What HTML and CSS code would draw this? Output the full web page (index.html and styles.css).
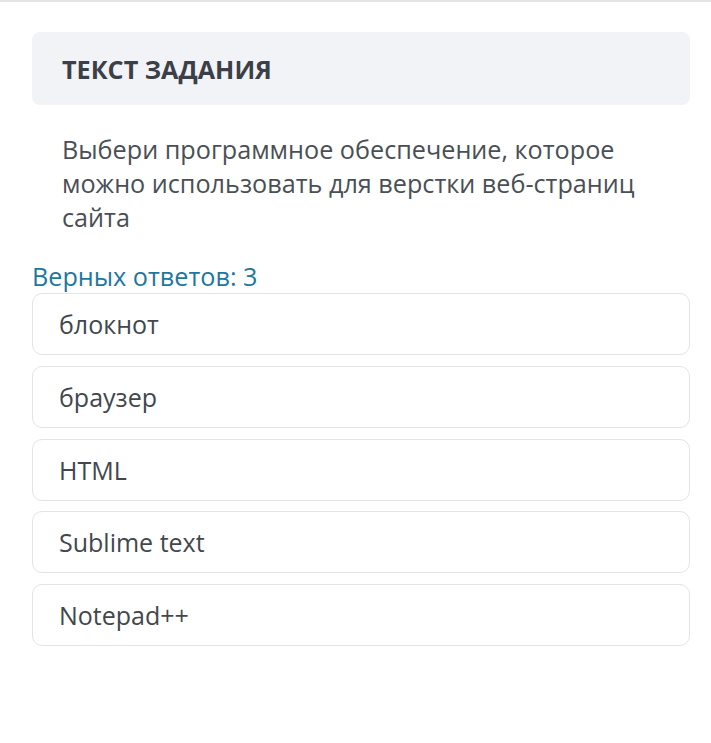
FILE: index.html
```html
<!DOCTYPE html>
<html lang="ru">
<head>
<meta charset="utf-8">
<link rel="stylesheet" href="styles.css">
</head>
<body>
<div class="topline"></div>
<main class="task">
  <div class="task-head">ТЕКСТ ЗАДАНИЯ</div>
  <p class="task-text">Выбери программное обеспечение, которое можно использовать для верстки веб-страниц сайта</p>
  <div class="answers-count">Верных ответов: 3</div>
  <ul class="options">
    <li class="option">блокнот</li>
    <li class="option">браузер</li>
    <li class="option">HTML</li>
    <li class="option">Sublime text</li>
    <li class="option">Notepad++</li>
  </ul>
</main>
</body>
</html>
```

FILE: styles.css
```css
* { box-sizing: border-box; }
html, body { margin: 0; padding: 0; background: #ffffff; }
body {
  font-family: "Open Sans", "Noto Sans", sans-serif;
  color: #44494f;
}
.topline {
  height: 2px;
  background: #e4e5e7;
}
.task {
  padding: 30px 21px 0 32px;
}
.task-head {
  height: 73px;
  background: #f2f3f6;
  border-radius: 8px;
  padding-left: 30px;
  display: flex;
  align-items: center;
  font-weight: 700;
  font-size: 25.2px;
  color: #3b4048;
}
.task-text {
  margin: 27px 0 0;
  padding: 0 30px;
  font-size: 25.2px;
  line-height: 34px;
  color: #4a4f56;
}
.answers-count {
  margin-top: 25px;
  font-size: 25.2px;
  line-height: 34px;
  color: #1d77a0;
}
.options {
  list-style: none;
  margin: 0;
  padding: 0;
  display: flex;
  flex-direction: column;
  gap: 10.75px;
}
.option {
  height: 62px;
  border: 1px solid #e3e4e6;
  border-radius: 10px;
  padding-left: 26px;
  display: flex;
  align-items: center;
  font-size: 25px;
  color: #43474d;
}
```
